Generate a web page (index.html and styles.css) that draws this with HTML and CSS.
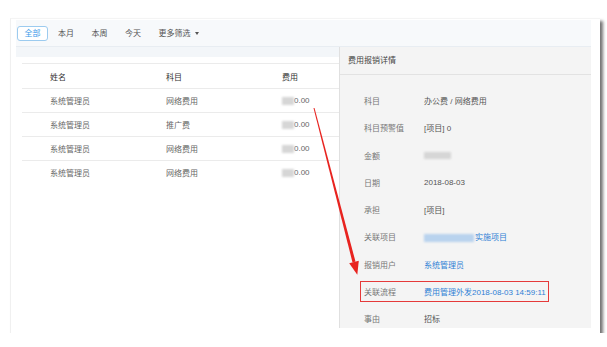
FILE: index.html
```html
<!DOCTYPE html>
<html lang='zh'>

<head>
    <meta charset='UTF-8'>
    <meta name='viewport' content='width=device-width, initial-scale=1.0'>
    <title>费用报销</title>
    <link rel="stylesheet" href="styles.css">
</head>

<body>
    <div class='shot'>
        <div class='filter'>
            <span class='tab on'>全部</span>
            <span class='tab'>本月</span>
            <span class='tab'>本周</span>
            <span class='tab'>今天</span>
            <span class='tab'>更多筛选<i class='caret'></i></span>
        </div>
        <div class='main'>
            <div class='list'>
                <div class='strip'></div>
                <table class='grid'>
                    <colgroup>
                        <col style='width: 116px;'>
                        <col style='width: 116px;'>
                        <col>
                    </colgroup>
                    <tr class='head'>
                        <th>姓名</th>
                        <th>科目</th>
                        <th>费用</th>
                    </tr>
                    <tr>
                        <td>系统管理员</td>
                        <td>网络费用</td>
                        <td><span class='blur'></span>0.00</td>
                    </tr>
                    <tr>
                        <td>系统管理员</td>
                        <td>推广费</td>
                        <td><span class='blur'></span>0.00</td>
                    </tr>
                    <tr>
                        <td>系统管理员</td>
                        <td>网络费用</td>
                        <td><span class='blur'></span>0.00</td>
                    </tr>
                    <tr>
                        <td>系统管理员</td>
                        <td>网络费用</td>
                        <td><span class='blur'></span>0.00</td>
                    </tr>
                </table>
            </div>
            <div class='detail'>
                <div class='detail-head'>费用报销详情</div>
                <div class='detail-body'>
                    <div class='kv'><span class='k'>科目</span><span class='v'>办公费 / 网络费用</span></div>
                    <div class='kv'><span class='k'>科目预警值</span><span class='v'>[项目] 0</span></div>
                    <div class='kv'><span class='k'>金额</span><span class='v'><span class='blur wide'></span></span></div>
                    <div class='kv'><span class='k'>日期</span><span class='v'>2018-08-03</span></div>
                    <div class='kv'><span class='k'>承担</span><span class='v'>[项目]</span></div>
                    <div class='kv'><span class='k'>关联项目</span><span class='v link'><span class='blur blue'></span>实施项目</span></div>
                    <div class='kv'><span class='k'>报销用户</span><span class='v link'>系统管理员</span></div>
                    <div class='kv mark'><span class='k'>关联流程</span><span class='v link'>费用管理外发2018-08-03 14:59:11</span></div>
                    <div class='kv'><span class='k'>事由</span><span class='v'>招标</span></div>
                </div>
            </div>
        </div>
    </div>

    <!-- annotation arrow drawn over the screenshot -->
    <svg class='arrow' width='607' height='347' viewBox='0 0 607 347'>
        <polygon points='313.5,108.1 314.5,107.9 355.5,261.6 352.5,262.4' fill='#e8231f' />
        <polygon points='358.8,260.7 357.3,274.8 349.2,263.3' fill='#e8231f' />
    </svg>
</body>

</html>
```

FILE: styles.css
```css
body {
    margin: 0;
    background: #fff;
    font-family: "Liberation Sans", "Noto Sans CJK SC", sans-serif;
    font-size: 8px;
    color: #555;
}

.shot {
    margin: 18px 0 0 10px;
    width: 590px;
    height: 315px;
    box-sizing: border-box;
    padding: 1px 9px 5px 5px;
    background: #fff;
    border-left: 1px solid #f0f0f0;
    border-top: 1px solid #f4f4f4;
    box-shadow: 3px 3px 3px rgba(0, 0, 0, 0.55);
}

.filter {
    height: 27px;
    box-sizing: border-box;
    display: flex;
    align-items: center;
    gap: 2.5px;
    padding-left: 1px;
    background: #f7f9fb;
    border-bottom: 1px solid #e8edf2;
}

.tab {
    height: 15px;
    line-height: 13px;
    box-sizing: border-box;
    padding: 0 6.5px;
    border: 1px solid transparent;
    border-radius: 3px;
    color: #555;
}

.tab.on {
    color: #3d9be9;
    border-color: #9ccbef;
    background: #fff;
}

.caret {
    display: inline-block;
    margin-left: 4px;
    vertical-align: middle;
    border-left: 2.5px solid transparent;
    border-right: 2.5px solid transparent;
    border-top: 3px solid #555;
}

.main {
    display: flex;
    height: 281px;
}

.list {
    width: 323px;
    background: #fff;
}

.strip {
    height: 10px;
    background: #f3f6f9;
}

.grid {
    margin: 6px 0 0 6px;
    width: 317px;
    border-collapse: collapse;
    table-layout: fixed;
}

.grid th,
.grid td {
    height: 23px;
    padding: 0 0 0 28px;
    text-align: left;
    font-weight: normal;
    border-top: 1px solid #ebebeb;
    color: #666;
}

.grid .head th {
    height: 24px;
    color: #333;
}

.blur {
    display: inline-block;
    width: 12px;
    height: 8px;
    vertical-align: middle;
    background: #d6d6d6;
    filter: blur(1px);
}

.blur.wide {
    width: 27px;
    height: 7px;
}

.blur.blue {
    width: 50px;
    height: 8px;
    margin-right: 1px;
    background: #b9d3ee;
}

.detail {
    width: 252px;
    box-sizing: border-box;
    background: #f4f4f4;
    border-left: 1px solid #e0e0e0;
}

.detail-head {
    height: 28px;
    line-height: 27px;
    box-sizing: border-box;
    padding-left: 8px;
    border-bottom: 1px solid #e2e2e2;
    color: #444;
}

.detail-body {
    padding: 12px 0 0 24px;
}

.kv {
    position: relative;
    display: flex;
    align-items: center;
    height: 27.25px;
}

.k {
    width: 60px;
    color: #777;
}

.v {
    color: #555;
}

.v.link {
    color: #2f7fd4;
}

.kv.mark::after {
    content: "";
    position: absolute;
    left: -4px;
    top: 3px;
    width: 189px;
    height: 21px;
    box-sizing: border-box;
    border: 1.5px solid #e53a3a;
}

.arrow {
    position: absolute;
    left: 0;
    top: 0;
    pointer-events: none;
}
```
